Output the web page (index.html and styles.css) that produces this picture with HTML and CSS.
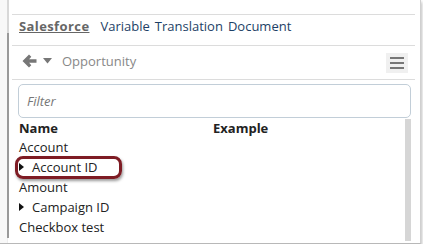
FILE: index.html
```html
<!DOCTYPE html>
<html>
<head>
<meta charset="UTF-8">
<title>Opportunity fields</title>
<link rel="stylesheet" href="styles.css">
</head>
<body>
<div class="frame">
<div class="gutter"><div class="gutter-bar"></div></div>
<div class="panel">
<div class="tabs">
<span class="tab active">Salesforce</span>
<span class="tab">Variable</span>
<span class="tab">Translation</span>
<span class="tab">Document</span>
</div>
<div class="nav">
<svg class="back" width="15" height="14" viewBox="0 0 15 14"><path d="M7 0.5 L0.5 7 L7 13.5 L9.3 11.2 L7.1 8.8 H14.5 V5.2 H7.1 L9.3 2.8 Z" fill="#777"/></svg>
<svg class="caret" width="9" height="6" viewBox="0 0 9 6"><path d="M0 0 H9 L4.5 5.5 Z" fill="#777"/></svg>
<span class="object">Opportunity</span>
<button class="menu"><span></span><span></span><span></span></button>
</div>
<div class="content">
<div class="filter">Filter</div>
<div class="table">
<div class="rows">
<div class="row head"><span class="col-name">Name</span><span class="col-example">Example</span></div>
<div class="row"><span class="col-name">Account</span></div>
<div class="row"><span class="col-name"><span class="tri"></span>Account ID</span><div class="callout"></div></div>
<div class="row"><span class="col-name">Amount</span></div>
<div class="row"><span class="col-name"><span class="tri"></span>Campaign ID</span></div>
<div class="row"><span class="col-name">Checkbox test</span></div>
</div>
<div class="scrollbar"></div>
</div>
</div>
</div>
</div>
</body>
</html>
```
FILE: styles.css
```css
body{margin:0;background:#fff;font-family:'Open Sans',sans-serif;font-size:13px;color:#222;}
.frame{width:420px;height:243px;display:flex;background:#fff;
border-right:1px solid #d0d0d0;border-bottom:1px solid #b8b8b8;
box-shadow:1px 2px 3px rgba(0,0,0,0.25);overflow:hidden;}
.gutter{width:7px;background:#f8f8f8;border-right:1px solid #eee;position:relative;}
.gutter-bar{position:absolute;left:7px;top:0;width:2px;height:238px;
background:linear-gradient(#d8d8d8 0,#d8d8d8 33px,#9a9a9a 33px);}
.panel{margin-left:4px;width:403px;padding-top:14px;}
.tabs{border-top:1px solid #dcdcdc;border-bottom:1px solid #dcdcdc;height:30px;
display:flex;align-items:flex-start;padding-left:7px;gap:5px;line-height:20px;}
.tabs .tab{margin-top:1px;}
.tab{color:#1d3f66;}
.tab.active{color:#666;font-weight:bold;text-decoration:underline;margin-right:6px;letter-spacing:0.4px;}
.nav{height:30px;padding-bottom:3px;border-bottom:1px solid #dcdcdc;display:flex;align-items:center;padding-left:10px;}
.back{margin-right:6px;}
.caret{margin-right:10px;}
.object{color:#888;margin-top:-1px;}
.menu{margin-left:auto;margin-right:7px;width:22px;height:20px;background:#f0f0f0;border:none;margin-top:3px;
padding:4px 4px;display:flex;flex-direction:column;justify-content:space-between;}
.menu span{display:block;height:2px;background:#777;}
.content{padding:4px 4px 0 6px;}
.filter{border:1px solid #c2ced8;border-radius:5px;box-sizing:border-box;height:34px;
padding-left:8px;line-height:32px;color:#777;font-style:italic;}
.table{display:flex;}
.rows{flex:1;padding-left:1px;}
.row{height:20px;line-height:20px;display:flex;position:relative;}
.row.head{font-weight:bold;height:18px;line-height:18px;margin-top:1px;}
.col-name{width:194px;display:flex;align-items:center;}
.tri{width:0;height:0;border-top:4px solid transparent;border-bottom:4px solid transparent;
border-left:5px solid #111;margin-right:8px;}
.callout{position:absolute;left:-4px;top:-1px;width:101px;height:17px;border:3px solid #7e1c24;
border-radius:8px;box-shadow:1px 2px 3px rgba(0,0,0,0.4);}
.scrollbar{width:6px;height:122px;background:#d6d6d6;margin-top:1px;}
```
